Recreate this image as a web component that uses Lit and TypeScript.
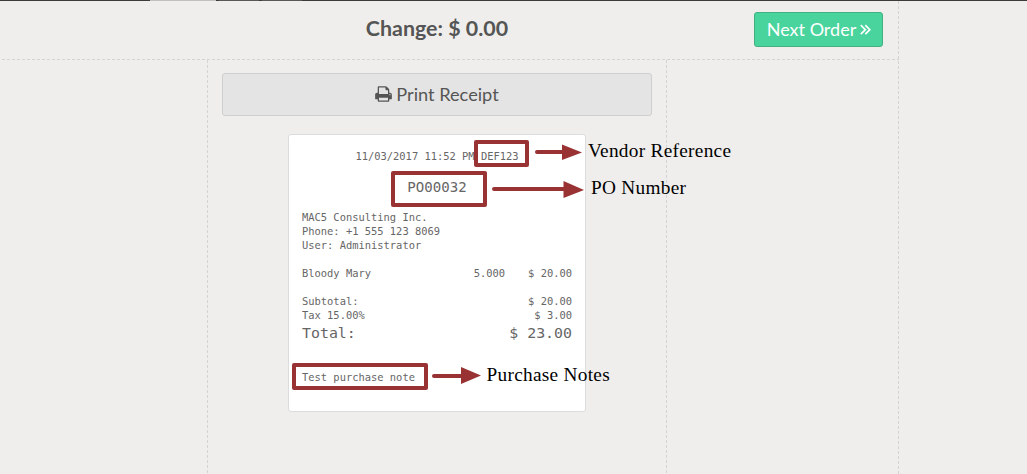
import { LitElement, html, css, svg } from "lit";
import { customElement } from "lit/decorators.js";

const printer = svg`<path d="M384 1536h896v-256H384v256zm0-640h896V512h-160q-40 0-68-28t-28-68V256H384v640zm1152 64q0-26-19-45t-45-19-45 19-19 45 19 45 45 19 45-19 19-45zm128 0v416q0 13-9.500 22.500t-22.500 9.500h-224v160q0 40-28 68t-68 28H352q-40 0-68-28t-28-68v-160H32q-13 0-22.500-9.500T0 1376V960q0-79 56.500-135.500T192 768h64V224q0-40 28-68t68-28h672q40 0 88 20t76 48l152 152q28 28 48 76t20 88v256h64q79 0 135.500 56.500T1664 960z"/>`;

@customElement("app-root")
export class AppRoot extends LitElement {
  static styles = css`
    :host {
      display: block;
      position: relative;
      width: 1027px;
      height: 474px;
      overflow: hidden;
      background: #efeeec;
      color: #555;
      font-family: Lato, sans-serif;
      --dash: #d3d3d3;
      --mark: #993333;
    }
    * { box-sizing: border-box; }
    .topbar {
      height: 1px;
      display: flex;
      background: #3e393a;
    }
    .tab { width: 40px; margin-left: 3px; background: #5b5657; }
    .tab.on { width: 66px; margin-left: 150px; background: #c2bfbd; }
    .screen {
      width: 899px;
      height: 473px;
      display: flex;
      flex-direction: column;
      background: repeating-linear-gradient(var(--dash) 0 3px, transparent 3px 5px) right 0 top 0 / 1px 100% no-repeat;
    }
    .head {
      height: 59px;
      flex: none;
      display: grid;
      grid-template-columns: 207px 460px 1fr;
      background: repeating-linear-gradient(90deg, transparent 0 2px, var(--dash) 2px 5px) left bottom / 100% 1px no-repeat;
    }
    .change {
      grid-column: 2;
      margin: 0;
      padding-top: 12px;
      text-align: center;
      font-size: 21.400px;
      line-height: 30px;
      font-weight: 700;
    }
    .next {
      justify-self: end;
      width: 129px;
      height: 35px;
      margin: 11px 16px 0 0;
      padding: 0;
      display: flex;
      align-items: center;
      justify-content: center;
      gap: 4px;
      border: 1px solid #42b07f;
      border-radius: 3px;
      background: #48d49c;
      color: #fff;
      font: 18px Lato, sans-serif;
    }
    .body {
      flex: 1;
      margin-left: 207px;
      width: 460px;
      padding: 13px 15px 0;
      background:
        repeating-linear-gradient(var(--dash) 0 3px, transparent 3px 5px) left top / 1px 100% no-repeat,
        repeating-linear-gradient(var(--dash) 0 3px, transparent 3px 5px) right top / 1px 100% no-repeat;
    }
    .print {
      width: 430px;
      height: 43px;
      padding: 0;
      display: flex;
      align-items: center;
      justify-content: center;
      gap: 4px;
      border: 1px solid #cfcfcf;
      border-radius: 3px;
      background: #e4e4e4;
      color: #555;
      font: 18.200px Lato, sans-serif;
    }
    .print span, .next span { margin-top: -1px; }
    .next span { margin-left: 1px; }
    .print svg { margin-top: -1px; }
    .ticket {
      width: 298px;
      height: 278px;
      margin: 18px 0 0 66px;
      padding: 14px 13px;
      border: 1px solid #dcdcdc;
      border-radius: 3px;
      background: #fff;
      color: #666;
      font: 10.430px/14px "DejaVu Sans Mono", monospace;
      white-space: pre;
    }
    .stamp { text-align: center; }
    .order { font-size: 14.100px; line-height: 20px; margin: 14px 0 13px; text-align: center; }
    .line { display: flex; }
    .line .name { flex: 1; }
    .line .price { width: 67px; text-align: right; }
    .gap { height: 14px; }
    .total { font-size: 14.900px; line-height: 22px; justify-content: space-between; }
    .note { margin-top: 26px; }
    .marks {
      position: absolute;
      inset: 0;
      width: 1027px;
      height: 474px;
      pointer-events: none;
    }
    .marks rect { fill: none; stroke: var(--mark); stroke-width: 4; stroke-linejoin: round; }
    .marks line { stroke: var(--mark); stroke-width: 4; stroke-linecap: round; }
    .marks polygon { fill: var(--mark); }
    .marks text { font: 19.300px "Liberation Serif", serif; letter-spacing: .29px; fill: #000; }
  `;

  render() {
    return html`
      <div class="topbar"><span class="tab on"></span><span class="tab"></span><span class="tab"></span></div>
      <div class="screen">
        <header class="head">
          <h1 class="change">Change: $ 0.00</h1>
          <button class="next"><span>Next Order</span><svg width="11" height="12" viewBox="0 0 11 12" fill="none" stroke="#fff" stroke-width="1.7"><path d="M.8 1.200 5.300 5.700.8 10.200M5.300 1.200l4.500 4.500-4.500 4.500"/></svg></button>
        </header>
        <main class="body">
          <button class="print"><svg width="17" height="18" viewBox="0 0 1664 1792" fill="#555">${printer}</svg><span>Print Receipt</span></button>
          <section class="ticket"><div class="stamp">11/03/2017 11:52 PM DEF123</div><div class="order">PO00032</div><div>MAC5 Consulting Inc.</div><div>Phone: +1 555 123 8069</div><div>User: Administrator</div><div class="gap"></div><div class="line"><span class="name">Bloody Mary</span><span>5.000</span><span class="price">$ 20.00</span></div><div class="gap"></div><div class="line"><span class="name">Subtotal:</span><span class="price">$ 20.00</span></div><div class="line"><span class="name">Tax 15.00%</span><span class="price">$ 3.00</span></div><div class="line total"><span>Total:</span><span>$ 23.00</span></div><div class="note">Test purchase note</div></section>
        </main>
      </div>
      <svg class="marks">
        <rect x="476" y="142" width="51" height="23" />
        <rect x="393" y="173" width="92" height="32" />
        <rect x="294" y="365" width="132" height="23" />
        <line x1="537" y1="152" x2="564" y2="152" />
        <polygon points="562,144.500 582,152.500 562,160" />
        <line x1="494" y1="189" x2="566" y2="189" />
        <polygon points="563.500,181 584,190 563.500,198" />
        <line x1="434" y1="376" x2="463" y2="376" />
        <polygon points="461,367 481,375.500 461,384" />
        <text x="588" y="157">Vendor Reference</text>
        <text x="591" y="194">PO Number</text>
        <text x="486.500" y="381">Purchase Notes</text>
      </svg>
    `;
  }
}
